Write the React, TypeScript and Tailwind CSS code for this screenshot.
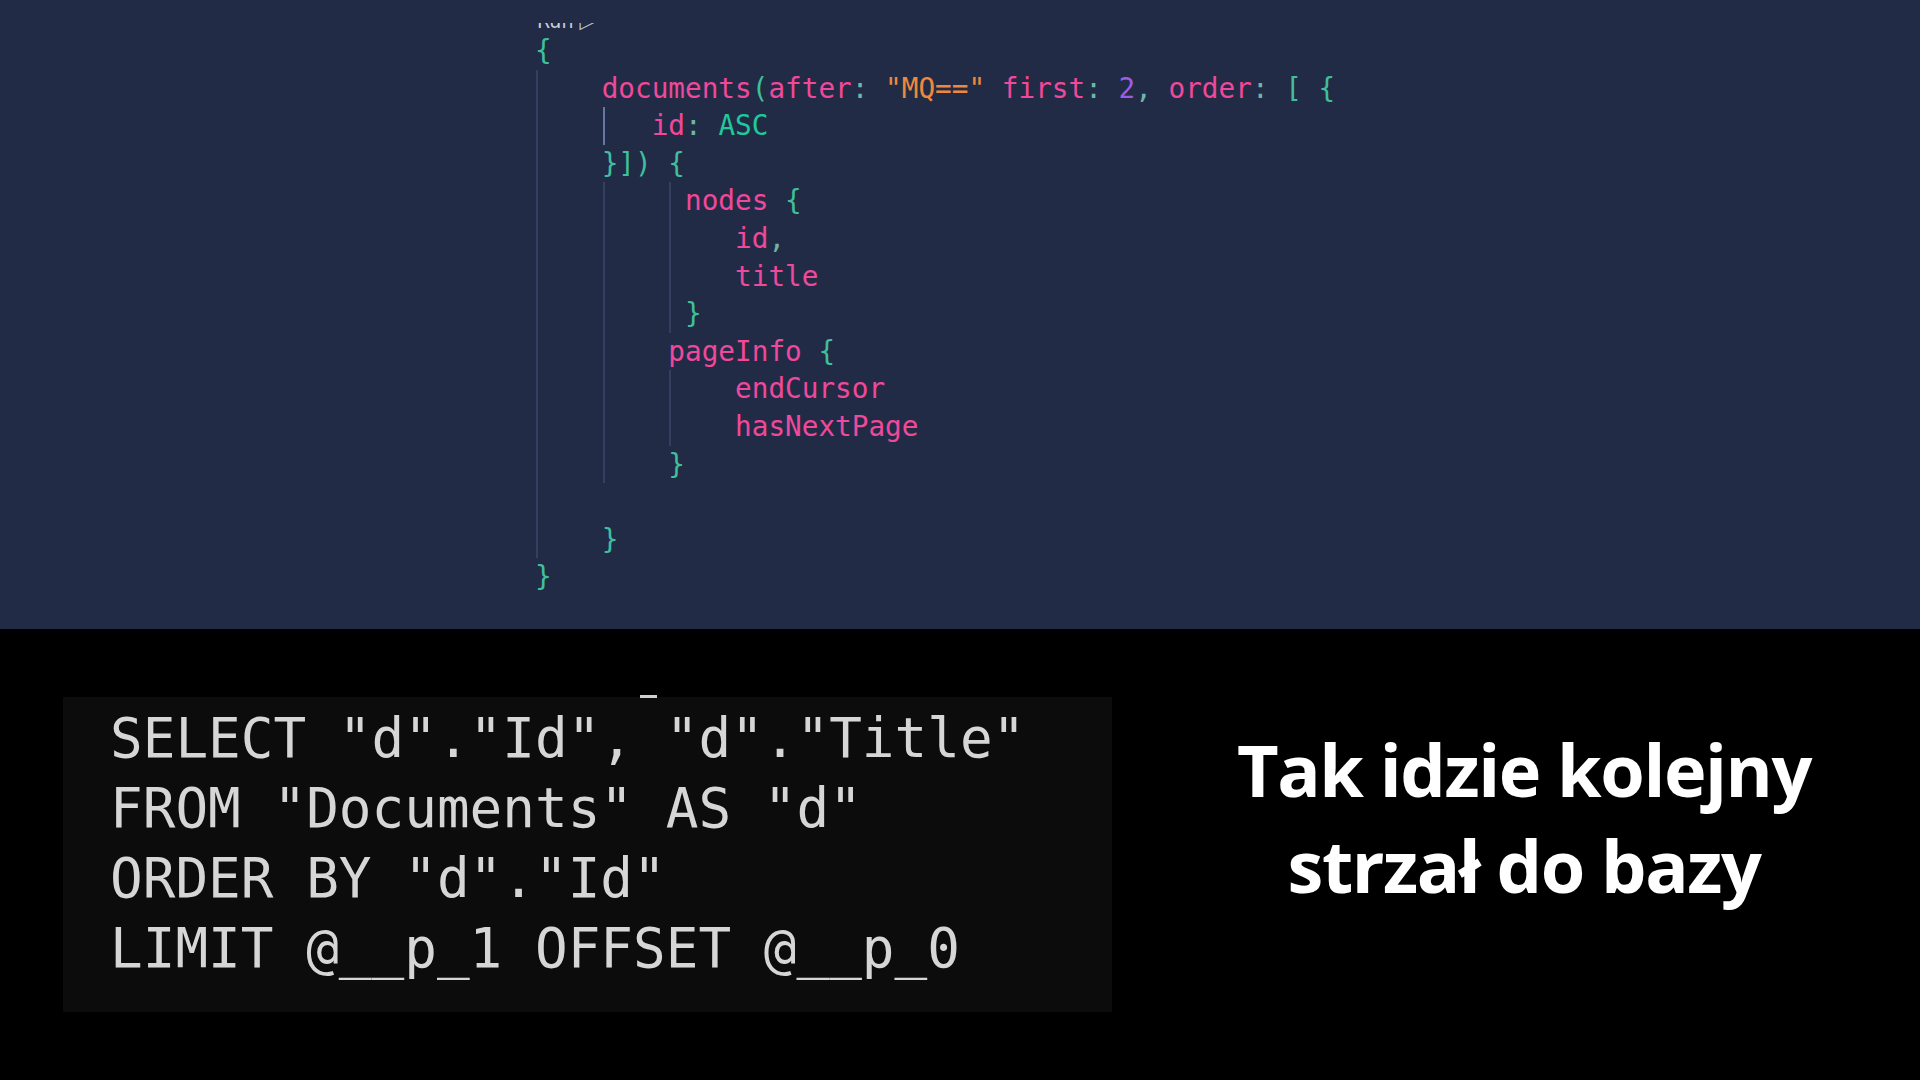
type Tok = { t: string; c: string };

const pink = "text-[#f0489a]";
const teal = "text-[#3fbf9c]";
const green = "text-[#1ec99c]";
const orange = "text-[#f0883c]";
const purple = "text-[#9b5de5]";
const colon = "text-[#6fb6a6]";

interface CodeLine {
  indent: number;
  tokens: Tok[];
  guides: { col: number; active?: boolean }[];
}

const lines: CodeLine[] = [
  { indent: 0, tokens: [{ t: "{", c: teal }], guides: [] },
  {
    indent: 4,
    tokens: [
      { t: "documents", c: pink },
      { t: "(", c: teal },
      { t: "after", c: pink },
      { t: ": ", c: colon },
      { t: '"MQ=="', c: orange },
      { t: " ", c: teal },
      { t: "first", c: pink },
      { t: ": ", c: colon },
      { t: "2", c: purple },
      { t: ", ", c: colon },
      { t: "order", c: pink },
      { t: ": ", c: colon },
      { t: "[ {", c: teal },
    ],
    guides: [{ col: 0 }],
  },
  {
    indent: 7,
    tokens: [
      { t: "id", c: pink },
      { t: ": ", c: colon },
      { t: "ASC", c: green },
    ],
    guides: [{ col: 0 }, { col: 4, active: true }],
  },
  { indent: 4, tokens: [{ t: "}]) {", c: teal }], guides: [{ col: 0 }] },
  {
    indent: 9,
    tokens: [
      { t: "nodes", c: pink },
      { t: " {", c: teal },
    ],
    guides: [{ col: 0 }, { col: 4 }, { col: 8 }],
  },
  {
    indent: 12,
    tokens: [
      { t: "id", c: pink },
      { t: ",", c: colon },
    ],
    guides: [{ col: 0 }, { col: 4 }, { col: 8 }],
  },
  { indent: 12, tokens: [{ t: "title", c: pink }], guides: [{ col: 0 }, { col: 4 }, { col: 8 }] },
  { indent: 9, tokens: [{ t: "}", c: teal }], guides: [{ col: 0 }, { col: 4 }, { col: 8 }] },
  {
    indent: 8,
    tokens: [
      { t: "pageInfo", c: pink },
      { t: " {", c: teal },
    ],
    guides: [{ col: 0 }, { col: 4 }],
  },
  { indent: 12, tokens: [{ t: "endCursor", c: pink }], guides: [{ col: 0 }, { col: 4 }, { col: 8 }] },
  { indent: 12, tokens: [{ t: "hasNextPage", c: pink }], guides: [{ col: 0 }, { col: 4 }, { col: 8 }] },
  { indent: 8, tokens: [{ t: "}", c: teal }], guides: [{ col: 0 }, { col: 4 }] },
  { indent: 0, tokens: [], guides: [{ col: 0 }] },
  { indent: 4, tokens: [{ t: "}", c: teal }], guides: [{ col: 0 }] },
  { indent: 0, tokens: [{ t: "}", c: teal }], guides: [] },
];

const CH = 16.68;

function GraphQLPanel() {
  return (
    <div className="h-[629px] overflow-hidden bg-[#222b46] pl-[535px] pt-[23px] font-['DejaVu_Sans_Mono',monospace] text-[27.7px]">
      {/* clipped code lens line */}
      <div className="relative h-[9px] overflow-hidden">
        <span className="absolute bottom-[1px] left-[2px] whitespace-pre text-[19px] leading-[19px] text-[#c9cfdc] font-['DejaVu_Sans',sans-serif]">
          Run ▷
        </span>
      </div>
      {lines.map((line, i) => (
        <div key={i} className="relative h-[37.6px] leading-[37.6px] whitespace-pre">
          {line.guides.map((g) => (
            <span
              key={g.col}
              className={
                "absolute top-0 h-full w-[2px] " + (g.active ? "bg-[#6677a3]" : "bg-[#34405f]")
              }
              style={{ left: g.col * CH + 1 }}
            />
          ))}
          <span>{" ".repeat(line.indent)}</span>
          {line.tokens.map((tk, j) => (
            <span key={j} className={tk.c}>
              {tk.t}
            </span>
          ))}
        </div>
      ))}
    </div>
  );
}

function SqlBox() {
  const sql = [
    'SELECT "d"."Id", "d"."Title"',
    'FROM "Documents" AS "d"',
    'ORDER BY "d"."Id"',
    "LIMIT @__p_1 OFFSET @__p_0",
  ];
  return (
    <div className="relative mt-[68px] ml-[63px] h-[315px] w-[1049px] shrink-0 bg-[#0c0c0c] pl-[47px] pt-[7px] font-['DejaVu_Sans_Mono',monospace] text-[54.3px] leading-[70px] text-[#d6d6d6]">
      <span className="absolute -top-[2px] left-[577px] h-[3px] w-[17px] bg-[#cfcfcf]" />
      {sql.map((l) => (
        <div key={l} className="whitespace-pre">
          {l}
        </div>
      ))}
    </div>
  );
}

export default function App() {
  return (
    <div className="h-[1080px] w-[1920px] overflow-hidden bg-black">
      <GraphQLPanel />
      <div className="flex h-[451px] items-start bg-black">
        <SqlBox />
        <div className="mt-[92px] ml-[62px] w-[700px] shrink-0 text-center font-['Open_Sans',sans-serif] text-[72px] font-bold leading-[96px] tracking-[-0.02em] text-white">
          <div>Tak idzie kolejny</div>
          <div>strzał do bazy</div>
        </div>
      </div>
    </div>
  );
}
